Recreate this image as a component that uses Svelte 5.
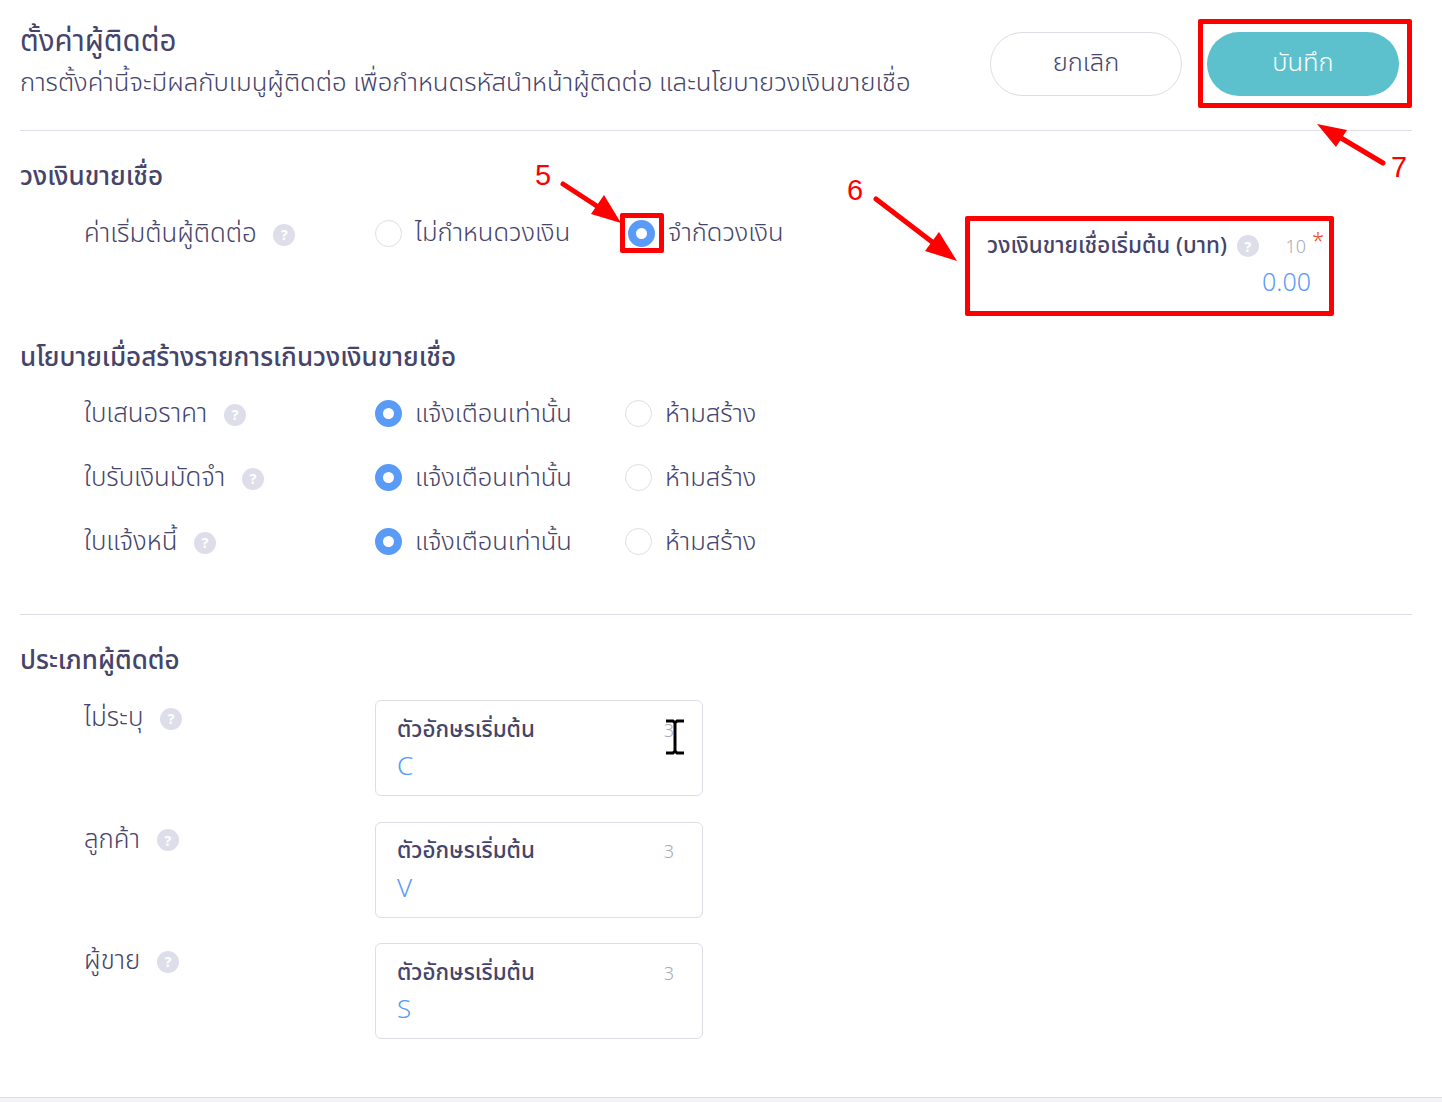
<script>
	const policies = ['ใบเสนอราคา', 'ใบรับเงินมัดจำ', 'ใบแจ้งหนี้']
	const types = [
		{ label: 'ไม่ระบุ', value: 'C' },
		{ label: 'ลูกค้า', value: 'V' },
		{ label: 'ผู้ขาย', value: 'S' }
	]
</script>

{#snippet help()}
	<span class="help">?</span>
{/snippet}

<div class="page">
	<header class="top">
		<div>
			<h1>ตั้งค่าผู้ติดต่อ</h1>
			<p class="sub">การตั้งค่านี้จะมีผลกับเมนูผู้ติดต่อ เพื่อกำหนดรหัสนำหน้าผู้ติดต่อ และนโยบายวงเงินขายเชื่อ</p>
		</div>
		<div class="actions">
			<button class="btn cancel">ยกเลิก</button>
			<div class="mark save-mark"><button class="btn save">บันทึก</button></div>
		</div>
	</header>

	<section class="credit">
		<h2>วงเงินขายเชื่อ</h2>
		<div class="row">
			<div class="label">ค่าเริ่มต้นผู้ติดต่อ {@render help()}</div>
			<div class="opt first"><span class="radio"></span>ไม่กำหนดวงเงิน</div>
			<div class="opt second">
				<span class="mark radio-mark"><span class="radio on"></span></span>จำกัดวงเงิน
			</div>
			<div class="mark field-mark">
				<div class="field-head">
					<span class="field-label">วงเงินขายเชื่อเริ่มต้น (บาท)</span>
					{@render help()}
					<span class="count">10</span>
					<span class="req">*</span>
				</div>
				<div class="amount">0.00</div>
			</div>
		</div>
	</section>

	<section class="policy">
		<h2>นโยบายเมื่อสร้างรายการเกินวงเงินขายเชื่อ</h2>
		{#each policies as p}
			<div class="row">
				<div class="label">{p} {@render help()}</div>
				<div class="opt first"><span class="radio on"></span>แจ้งเตือนเท่านั้น</div>
				<div class="opt"><span class="radio"></span>ห้ามสร้าง</div>
			</div>
		{/each}
	</section>

	<section class="types">
		<h2>ประเภทผู้ติดต่อ</h2>
		{#each types as t}
			<div class="type-row">
				<div class="label">{t.label} {@render help()}</div>
				<div class="box">
					<div class="box-head"><span class="field-label">ตัวอักษรเริ่มต้น</span><span class="count">3</span></div>
					<div class="box-value">{t.value}</div>
				</div>
			</div>
		{/each}
	</section>

	<div class="foot"></div>

	<!-- annotations drawn on top of the screenshot -->
	<svg class="arrows" width="1442" height="1102" viewBox="0 0 1442 1102">
		<g stroke="#f00" stroke-width="5" stroke-linecap="round" fill="#f00">
			<line x1="563" y1="184" x2="606" y2="212" />
			<polygon points="621,223 591,214 604,195" stroke="none" />
			<line x1="876" y1="199" x2="940" y2="248" />
			<polygon points="957,261 925,251 939,232" stroke="none" />
			<line x1="1383" y1="163" x2="1336" y2="135" />
			<polygon points="1317,124 1347,130 1336,147" stroke="none" />
		</g>
	</svg>
	<span class="num n5">5</span>
	<span class="num n6">6</span>
	<span class="num n7">7</span>

	<svg class="cursor" width="22" height="36" viewBox="0 0 22 36">
		<path d="M2 2h7l2 2 2-2h7M11 4v28M2 34h7l2-2 2 2h7" fill="none" stroke="#000" stroke-width="3" />
	</svg>
</div>

<style>
	:global(body) {
		margin: 0;
		background: #fff;
	}

	.page {
		position: relative;
		width: 1442px;
		height: 1102px;
		overflow: hidden;
		box-sizing: border-box;
		padding: 0 30px 0 20px;
		font-family: 'Noto Sans', 'Noto Sans Thai', 'Open Sans', sans-serif;
		color: #45446a;
	}

	.top {
		display: flex;
		justify-content: space-between;
		height: 131px;
		box-sizing: border-box;
		border-bottom: 1px solid #dddde6;
	}

	h1 {
		margin: 21px 0 0;
		font-size: 29.5px;
		line-height: 38px;
		font-weight: 400;
	}

	.sub {
		margin: 2px 0 0;
		font-size: 25.7px;
		line-height: 42px;
		font-weight: 300;
		white-space: nowrap;
	}

	.actions {
		display: flex;
		gap: 16px;
		align-items: flex-start;
		padding-top: 32px;
	}

	.btn {
		display: block;
		width: 192px;
		height: 64px;
		padding: 0 0 3px;
		border-radius: 32px;
		font: inherit;
		font-size: 25.5px;
		font-weight: 300;
		cursor: pointer;
	}

	.cancel {
		background: #fff;
		border: 1px solid #dddde6;
		color: #45446a;
	}

	.save {
		background: #5cc1cd;
		border: 0;
		color: #fff;
	}

	.mark {
		border: 5px solid #f00;
		border-radius: 2px;
		box-sizing: border-box;
	}

	.save-mark {
		margin-top: -13px;
		padding: 8px 8px 7px 4px;
	}

	h2 {
		margin: 0;
		font-size: 26px;
		line-height: 34px;
		font-weight: 500;
	}

	.credit {
		height: 208px;
		padding-top: 27px;
		box-sizing: border-box;
	}

	.row {
		display: flex;
		align-items: center;
		height: 64px;
		padding-left: 64px;
		font-size: 25.5px;
		font-weight: 300;
	}

	.credit .row {
		align-items: flex-start;
		height: auto;
		margin-top: 6px;
	}

	.label {
		width: 291px;
		flex: none;
		font-size: 25.8px;
		font-weight: 300;
	}

	.credit .label {
		margin-top: 16px;
	}

	.type-row .label {
		margin-top: -2px;
	}

	.opt {
		display: flex;
		align-items: center;
		gap: 13px;
		width: 250px;
		flex: none;
	}

	.credit .opt {
		height: 64px;
		margin-top: 3px;
	}

	.credit .first {
		width: 245px;
	}

	.credit .second {
		width: 345px;
		gap: 4px;
	}

	.radio {
		display: inline-block;
		width: 27px;
		height: 27px;
		box-sizing: border-box;
		border: 1px solid #dddde6;
		border-radius: 50%;
		background: #fff;
		flex: none;
	}

	.radio.on {
		border: 8px solid #5a9bf8;
	}

	.policy .radio {
		margin-top: -2px;
	}

	.radio-mark {
		display: inline-flex;
		align-items: center;
		justify-content: center;
		width: 44px;
		height: 40px;
		padding-right: 2px;
	}

	.help {
		display: inline-flex;
		align-items: center;
		justify-content: center;
		width: 22px;
		height: 22px;
		margin-left: 10px;
		border-radius: 50%;
		background: #dedeea;
		color: #fff;
		font-size: 14px;
		font-weight: 700;
		vertical-align: 2px;
	}

	.field-mark {
		width: 369px;
		height: 100px;
		margin-top: 18px;
		padding: 5px 18px 0 17px;
	}

	.field-head {
		display: flex;
		align-items: center;
		position: relative;
		height: 40px;
	}

	.field-label {
		font-size: 22.4px;
		font-weight: 500;
	}

	.count {
		font-size: 18px;
		font-weight: 300;
		color: #a9a9b8;
		margin-left: auto;
		margin-right: 5px;
	}

	.req {
		position: absolute;
		right: -13px;
		top: -2px;
		color: #f0452a;
		font-size: 22px;
		line-height: 30px;
	}

	.amount {
		margin-top: -2px;
		text-align: right;
		font-size: 25px;
		font-weight: 300;
		color: #5a9bf8;
	}

	.policy {
		height: 276px;
		box-sizing: border-box;
		border-bottom: 1px solid #dddde6;
	}

	.policy h2 {
		margin-bottom: 9px;
	}

	.types {
		padding-top: 27px;
	}

	.types h2 {
		margin-bottom: 24px;
	}

	.type-row {
		display: flex;
		padding-left: 64px;
		height: 121.5px;
	}

	.box {
		width: 328px;
		height: 96px;
		box-sizing: border-box;
		border: 1px solid #dddde6;
		border-radius: 6px;
		padding: 11px 28px 0 21px;
	}

	.box-head {
		display: flex;
		align-items: center;
		justify-content: space-between;
		height: 35px;
	}

	.box-head .count {
		margin-right: 0;
	}

	.box-value {
		margin-top: -1px;
		font-size: 26px;
		font-weight: 300;
		line-height: 38px;
		color: #5a9bf8;
	}

	.foot {
		position: absolute;
		left: 0;
		right: 0;
		bottom: 0;
		height: 4px;
		background: #f2f2f7;
		border-top: 1px solid #dddde6;
	}

	.arrows {
		position: absolute;
		left: 0;
		top: 0;
		pointer-events: none;
	}

	.num {
		position: absolute;
		color: #f00;
		font-family: 'Liberation Sans', sans-serif;
		font-size: 29px;
		line-height: 32px;
	}

	.n5 { left: 535px; top: 159px; }
	.n6 { left: 847px; top: 174px; }
	.n7 { left: 1391px; top: 151px; }

	.cursor {
		position: absolute;
		left: 664px;
		top: 719px;
	}
</style>
